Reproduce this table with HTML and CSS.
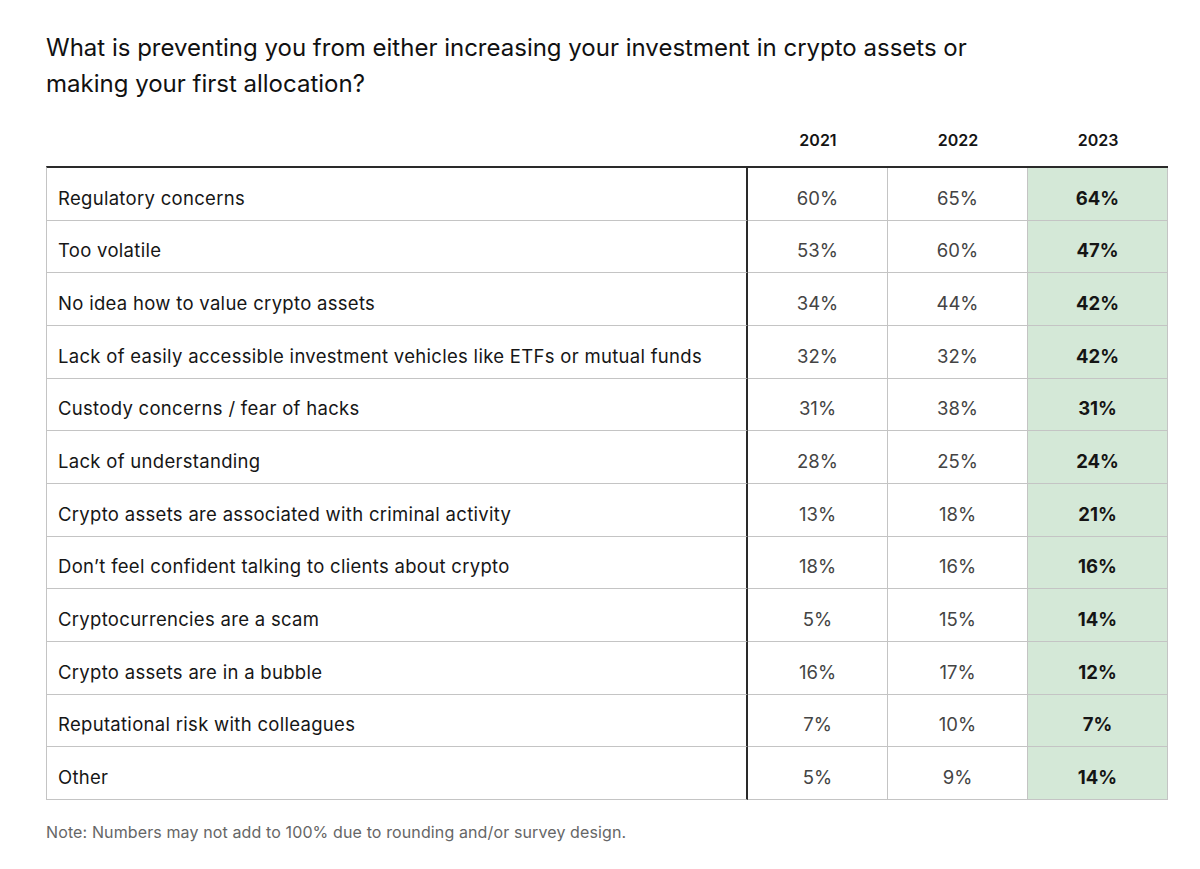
FILE: index.html
```html
<!DOCTYPE html>
<html lang="en">
<head>
<meta charset="utf-8">
<title>Crypto investment barriers</title>
<link rel="stylesheet" href="styles.css">
</head>
<body>
<main class="page">
  <h1 class="title">What is preventing you from either increasing your investment in crypto assets or making your first allocation?</h1>
  <div class="head-row">
    <div class="head-label"></div>
    <div class="head-year">2021</div>
    <div class="head-year">2022</div>
    <div class="head-year">2023</div>
  </div>
  <div class="table">
    <div class="row"><div class="label">Regulatory concerns</div><div class="val">60%</div><div class="val">65%</div><div class="val hl">64%</div></div>
    <div class="row"><div class="label">Too volatile</div><div class="val">53%</div><div class="val">60%</div><div class="val hl">47%</div></div>
    <div class="row"><div class="label">No idea how to value crypto assets</div><div class="val">34%</div><div class="val">44%</div><div class="val hl">42%</div></div>
    <div class="row"><div class="label">Lack of easily accessible investment vehicles like ETFs or mutual funds</div><div class="val">32%</div><div class="val">32%</div><div class="val hl">42%</div></div>
    <div class="row"><div class="label">Custody concerns / fear of hacks</div><div class="val">31%</div><div class="val">38%</div><div class="val hl">31%</div></div>
    <div class="row"><div class="label">Lack of understanding</div><div class="val">28%</div><div class="val">25%</div><div class="val hl">24%</div></div>
    <div class="row"><div class="label">Crypto assets are associated with criminal activity</div><div class="val">13%</div><div class="val">18%</div><div class="val hl">21%</div></div>
    <div class="row"><div class="label">Don’t feel confident talking to clients about crypto</div><div class="val">18%</div><div class="val">16%</div><div class="val hl">16%</div></div>
    <div class="row"><div class="label">Cryptocurrencies are a scam</div><div class="val">5%</div><div class="val">15%</div><div class="val hl">14%</div></div>
    <div class="row"><div class="label">Crypto assets are in a bubble</div><div class="val">16%</div><div class="val">17%</div><div class="val hl">12%</div></div>
    <div class="row"><div class="label">Reputational risk with colleagues</div><div class="val">7%</div><div class="val">10%</div><div class="val hl">7%</div></div>
    <div class="row"><div class="label">Other</div><div class="val">5%</div><div class="val">9%</div><div class="val hl">14%</div></div>
  </div>
  <p class="note">Note: Numbers may not add to 100% due to rounding and/or survey design.</p>
</main>
</body>
</html>
```

FILE: styles.css
```css
* { box-sizing: border-box; }

html, body {
  margin: 0;
  padding: 0;
  background: #ffffff;
}

body {
  font-family: Inter, "Liberation Sans", Arial, sans-serif;
  color: #151515;
}

.page {
  padding: 30px 0 0 46px;
  width: 1200px;
}

.title {
  margin: 0;
  width: 960px;
  font-size: 24px;
  line-height: 36px;
  font-weight: 400;
  color: #111111;
}

.head-row,
.row {
  display: grid;
  grid-template-columns: 701px 140px 140px 140px;
}

.head-row {
  width: 1122px;
  padding: 28px 0 16px 1px;
}

.head-year {
  font-size: 16px;
  line-height: 20px;
  font-weight: 600;
  text-align: center;
  color: #141414;
}

.table {
  width: 1122px;
  border-top: 2px solid #2a2a2a;
  border-left: 1px solid #c4c4c4;
}

.row {
  height: 52.667px;
}

.label,
.val {
  display: flex;
  align-items: center;
  padding-top: 8px;
  border-bottom: 1px solid #c4c4c4;
  font-size: 18.5px;
  line-height: 20px;
}

.label {
  padding-left: 11px;
  letter-spacing: 0.3px;
  color: #161616;
  border-right: 2px solid #2a2a2a;
}

.val {
  justify-content: center;
  color: #444444;
  border-right: 1px solid #c4c4c4;
}

.val.hl {
  background: #d4e8d7;
  color: #151515;
  font-weight: 700;
}

.note {
  margin: 22px 0 0;
  font-size: 16px;
  letter-spacing: 0.12px;
  line-height: 20px;
  color: #666666;
}
```
